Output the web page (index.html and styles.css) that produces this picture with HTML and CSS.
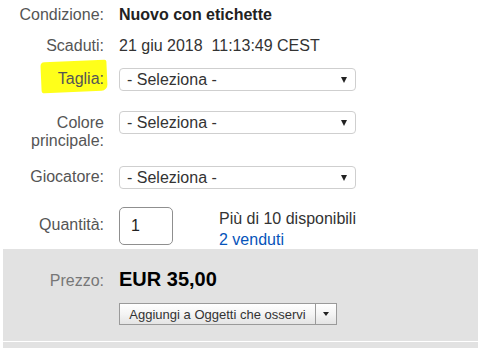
FILE: index.html
```html
<!DOCTYPE html>
<html lang="it">
<head>
<meta charset="utf-8">
<link rel="stylesheet" href="styles.css">
</head>
<body>
<div class="details">
  <div class="row row-cond">
    <div class="label">Condizione:</div>
    <div class="value strong">Nuovo con etichette</div>
  </div>
  <div class="row row-exp">
    <div class="label">Scaduti:</div>
    <div class="value">21 giu 2018&nbsp;&nbsp;11:13:49 CEST</div>
  </div>
  <div class="row row-sel row-taglia">
    <div class="label"><span class="hl">Taglia:</span></div>
    <div class="select"><span>- Seleziona -</span><span class="arrow"></span></div>
  </div>
  <div class="row row-sel row-colore">
    <div class="label two">Colore<br>principale:</div>
    <div class="select"><span>- Seleziona -</span><span class="arrow"></span></div>
  </div>
  <div class="row row-sel row-gioc">
    <div class="label">Giocatore:</div>
    <div class="select"><span>- Seleziona -</span><span class="arrow"></span></div>
  </div>
  <div class="row row-qty">
    <div class="label">Quantità:</div>
    <div class="qty">1</div>
    <div class="avail">
      <div>Più di 10 disponibili</div>
      <a class="sold" href="#">2 venduti</a>
    </div>
  </div>
</div>
<div class="price-panel">
  <div class="row row-price">
    <div class="label light">Prezzo:</div>
    <div class="price">EUR 35,00</div>
  </div>
  <div class="watch">
    <button class="watch-btn">Aggiungi a Oggetti che osservi</button><button class="watch-drop"><span class="small-arrow"></span></button>
  </div>
</div>
<div class="panel-next"></div>
</body>
</html>
```

FILE: styles.css
```css
html, body {
  margin: 0;
  padding: 0;
  background: #fff;
}
body {
  font-family: "Liberation Sans", Arial, sans-serif;
  font-size: 16px;
  color: #333;
  width: 489px;
  height: 348px;
  overflow: hidden;
}
.details {
  padding-top: 5px;
}
.row {
  display: flex;
  align-items: flex-start;
}
.label {
  width: 104px;
  flex: none;
  text-align: right;
  color: #555;
  margin-right: 15px;
  line-height: 20px;
}
.value {
  line-height: 20px;
}
.strong {
  font-weight: bold;
  color: #222;
}
.row-exp {
  margin-top: 11px;
}
.row-sel .label {
  padding-top: 1px;
}
.row-taglia {
  margin-top: 12px;
}
.row-colore {
  margin-top: 20px;
}
.row-colore .label {
  line-height: 18px;
  padding-top: 3px;
}
.row-gioc {
  margin-top: 16px;
}
.hl {
  position: relative;
  z-index: 0;
}
.hl::before {
  content: "";
  position: absolute;
  left: -17px;
  right: -3px;
  top: -9px;
  bottom: -5px;
  background: #ffff1a;
  transform: rotate(-2.5deg);
  border-radius: 4px 2px 6px 3px;
  z-index: -1;
}
.select {
  box-sizing: border-box;
  width: 237px;
  height: 23px;
  border: 1px solid #cfcfcf;
  border-radius: 4px;
  display: flex;
  align-items: center;
  justify-content: space-between;
  padding: 0 8px 0 7px;
  color: #333;
  background: #fff;
}
.arrow {
  width: 0;
  height: 0;
  border-left: 3.5px solid transparent;
  border-right: 3.5px solid transparent;
  border-top: 6px solid #222;
  margin-top: 1px;
}
.row-qty {
  margin-top: 18px;
  height: 38px;
}
.row-qty .label {
  padding-top: 8px;
}
.qty {
  box-sizing: border-box;
  width: 54px;
  height: 38px;
  border: 1px solid #8f8f8f;
  border-radius: 5px;
  padding-left: 11px;
  line-height: 36px;
  color: #222;
  flex: none;
}
.avail {
  margin-left: 46px;
  line-height: 21px;
  color: #333;
  margin-top: 1px;
}
.sold {
  display: block;
  color: #0654ba;
  text-decoration: none;
}
.price-panel {
  margin: 4px 11px 0 3px;
  height: 92px;
  background: #e2e2e2;
  box-sizing: border-box;
  padding-top: 22px;
}
.row-price {
  align-items: center;
}
.row-price .label {
  width: 101px;
  margin-right: 15px;
}
.light {
  color: #777;
}
.price {
  font-size: 20px;
  font-weight: bold;
  color: #000;
  line-height: 24px;
  margin-top: -4px;
}
.watch {
  display: flex;
  margin-top: 12px;
  margin-left: 116px;
}
.watch-btn,
.watch-drop {
  font-family: "Liberation Sans", Arial, sans-serif;
  font-size: 13px;
  color: #333;
  height: 22px;
  border: 1px solid #9a9a9a;
  background: linear-gradient(#ffffff, #f4f4f4 50%, #e4e4e4);
  margin: 0;
  border-radius: 0;
}
.watch-btn {
  width: 197px;
  padding: 0;
  text-align: center;
}
.watch-drop {
  width: 21px;
  border-left: none;
  display: flex;
  align-items: center;
  justify-content: center;
  padding: 0;
}
.small-arrow {
  width: 0;
  height: 0;
  border-left: 3.5px solid transparent;
  border-right: 3.5px solid transparent;
  border-top: 4px solid #222;
}
.panel-next {
  margin: 1px 11px 0 3px;
  height: 10px;
  background: #e2e2e2;
}
```
